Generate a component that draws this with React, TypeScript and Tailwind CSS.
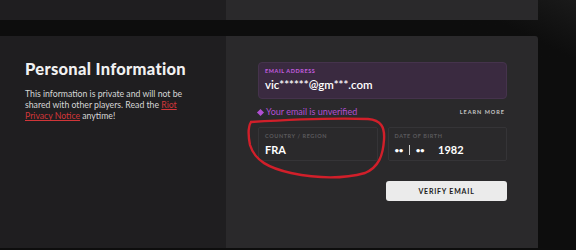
import React from 'react';

const font = { fontFamily: 'Lato, "Noto Sans", sans-serif' };

const ScribbleCircle = () => (
  <svg className="absolute left-[243px] top-[115px] pointer-events-none" width="148" height="66" viewBox="0 0 148 66" fill="none">
    <path
      d="M8 7 C40 5, 95 3, 125 4 C138 5, 142 12, 141 25 C140 40, 136 52, 122 58 C100 64, 72 63, 48 58 C26 53, 12 46, 7 30 C5 20, 5 12, 8 7"
      stroke="#d11f2a"
      strokeWidth="2.4"
      strokeLinecap="round"
    />
  </svg>
);

const Field = ({ label, children }: { label: string; children: React.ReactNode }) => (
  <div className="flex-1 h-[34px] border border-[#353437] rounded-[2px] px-[6px] pt-[4px]">
    <div className="text-[5.5px] font-bold tracking-[0.6px] text-[#5b5a5d] leading-[8px]">{label}</div>
    <div className="mt-[4px] text-[11px] font-bold text-white leading-[12px]">{children}</div>
  </div>
);

export default function App() {
  return (
    <div
      className="relative w-[576px] h-[250px] overflow-hidden bg-[#0d0d0d]"
      style={font}
    >
      <div className="absolute right-0 top-0 w-[120px] h-[60px] bg-gradient-to-bl from-[#1a1a1a] via-[#0d0d0d] to-[#0d0d0d] pointer-events-none" />
      <div className="relative flex w-[538px] h-[20px]">
        <div className="w-[226px] bg-[#1f1e20]" />
        <div className="flex-1 bg-[#2a292b]" />
      </div>

      <div className="relative mt-[16px] flex w-[538px] h-[212px] rounded-tr-[3px] overflow-hidden">
        <div className="w-[226px] bg-[#1f1e20] pl-[25px] pt-[24px]">
          <h2 className="text-[16.5px] font-black text-[#f1f1f1] leading-[18px] tracking-[0.3px]">Personal Information</h2>
          <p className="mt-[10px] w-[172px] text-[8.7px] leading-[11px] text-[#d6d6d6]">
            This information is private and will not be shared with other players. Read the{' '}
            <span className="text-[#d13639] underline">Riot Privacy Notice</span> anytime!
          </p>
        </div>

        <div className="flex-1 bg-[#2a292b] pl-[32px] pr-[31px] pt-[26px]">
          <div className="h-[37px] rounded-[4px] bg-[#3a2a40] border border-[#45334c] px-[6px] pt-[5px]">
            <div className="text-[5.5px] font-bold tracking-[0.6px] text-[#c75ee0] leading-[7px]">EMAIL ADDRESS</div>
            <div className="mt-[3px] text-[11.5px] font-semibold text-white leading-[14px]">vic******@gm***.com</div>
          </div>

          <div className="mt-[7px] flex items-center justify-between">
            <div className="flex items-center gap-[3px] text-[9px] text-[#b14fd2] leading-[12px]">
              <span className="inline-block w-[5px] h-[5px] rotate-45 bg-[#b14fd2]" />
              <span>Your email is unverified</span>
            </div>
            <div className="text-[5.5px] font-bold tracking-[1px] text-[#c5c5c5] pr-[2px]">LEARN MORE</div>
          </div>

          <div className="mt-[9px] flex gap-[10px]">
            <Field label="COUNTRY / REGION">FRA</Field>
            <Field label="DATE OF BIRTH">
              <span className="flex items-center">
                <span className="text-[8px] tracking-[-0.5px]">••</span>
                <span className="mx-[6px] w-px h-[10px] bg-[#d0d0d0]" />
                <span className="text-[8px] tracking-[-0.5px]">••</span>
                <span className="ml-[14px]">1982</span>
              </span>
            </Field>
          </div>

          <div className="mt-[20px] flex justify-end">
            <button className="w-[121px] h-[20px] rounded-[3px] bg-[#ebebeb] text-[7px] font-bold tracking-[0.8px] text-[#1a1a1a]">
              VERIFY EMAIL
            </button>
          </div>
        </div>
      </div>

      <ScribbleCircle />
    </div>
  );
}
